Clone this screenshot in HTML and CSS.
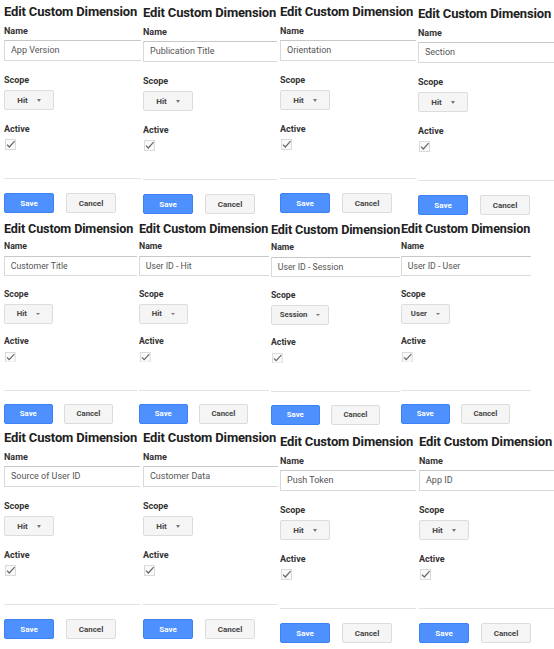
FILE: index.html
```html
<!DOCTYPE html>
<html lang="en">
<head>
    <meta charset="UTF-8">
    <meta name="viewport" content="width=device-width, initial-scale=1.0">
    <title>Edit Custom Dimension</title>
    <link rel="stylesheet" href="styles.css">
</head>
<body>
    <div class="collage">
        <!-- first row of screenshots -->
        <div class="row row-top">
            <section class="tile tile-1">
                <div class="panel">
                    <h2 class="title">Edit Custom Dimension</h2>
                    <div class="label">Name</div>
                    <div class="field">App Version</div>
                    <div class="label spaced">Scope</div>
                    <div class="scope">Hit <span class="caret"></span></div>
                    <div class="label spaced">Active</div>
                    <svg class="check" viewBox="0 0 11 11"><rect x="0.5" y="0.5" width="10" height="10"/><path d="M2 5.6 L4.3 8 L9.6 2.2"/></svg>
                    <hr class="divider">
                    <div class="actions"><span class="btn save">Save</span><span class="btn cancel">Cancel</span></div>
                </div>
            </section>
            <section class="tile tile-2">
                <div class="panel">
                    <h2 class="title">Edit Custom Dimension</h2>
                    <div class="label">Name</div>
                    <div class="field">Publication Title</div>
                    <div class="label spaced">Scope</div>
                    <div class="scope">Hit <span class="caret"></span></div>
                    <div class="label spaced">Active</div>
                    <svg class="check" viewBox="0 0 11 11"><rect x="0.5" y="0.5" width="10" height="10"/><path d="M2 5.6 L4.3 8 L9.6 2.2"/></svg>
                    <hr class="divider">
                    <div class="actions"><span class="btn save">Save</span><span class="btn cancel">Cancel</span></div>
                </div>
            </section>
            <section class="tile tile-3">
                <div class="panel">
                    <h2 class="title">Edit Custom Dimension</h2>
                    <div class="label">Name</div>
                    <div class="field">Orientation</div>
                    <div class="label spaced">Scope</div>
                    <div class="scope">Hit <span class="caret"></span></div>
                    <div class="label spaced">Active</div>
                    <svg class="check" viewBox="0 0 11 11"><rect x="0.5" y="0.5" width="10" height="10"/><path d="M2 5.6 L4.3 8 L9.6 2.2"/></svg>
                    <hr class="divider">
                    <div class="actions"><span class="btn save">Save</span><span class="btn cancel">Cancel</span></div>
                </div>
            </section>
            <section class="tile tile-4">
                <div class="panel">
                    <h2 class="title">Edit Custom Dimension</h2>
                    <div class="label">Name</div>
                    <div class="field">Section</div>
                    <div class="label spaced">Scope</div>
                    <div class="scope">Hit <span class="caret"></span></div>
                    <div class="label spaced">Active</div>
                    <svg class="check" viewBox="0 0 11 11"><rect x="0.5" y="0.5" width="10" height="10"/><path d="M2 5.6 L4.3 8 L9.6 2.2"/></svg>
                    <hr class="divider">
                    <div class="actions"><span class="btn save">Save</span><span class="btn cancel">Cancel</span></div>
                </div>
            </section>
        </div>

        <!-- second row, captured slightly smaller -->
        <div class="row row-mid">
            <section class="tile tile-5">
                <div class="panel">
                    <h2 class="title">Edit Custom Dimension</h2>
                    <div class="label">Name</div>
                    <div class="field">Customer Title</div>
                    <div class="label spaced">Scope</div>
                    <div class="scope">Hit <span class="caret"></span></div>
                    <div class="label spaced">Active</div>
                    <svg class="check" viewBox="0 0 11 11"><rect x="0.5" y="0.5" width="10" height="10"/><path d="M2 5.6 L4.3 8 L9.6 2.2"/></svg>
                    <hr class="divider">
                    <div class="actions"><span class="btn save">Save</span><span class="btn cancel">Cancel</span></div>
                </div>
            </section>
            <section class="tile tile-6">
                <div class="panel">
                    <h2 class="title">Edit Custom Dimension</h2>
                    <div class="label">Name</div>
                    <div class="field">User ID - Hit</div>
                    <div class="label spaced">Scope</div>
                    <div class="scope">Hit <span class="caret"></span></div>
                    <div class="label spaced">Active</div>
                    <svg class="check" viewBox="0 0 11 11"><rect x="0.5" y="0.5" width="10" height="10"/><path d="M2 5.6 L4.3 8 L9.6 2.2"/></svg>
                    <hr class="divider">
                    <div class="actions"><span class="btn save">Save</span><span class="btn cancel">Cancel</span></div>
                </div>
            </section>
            <section class="tile tile-7">
                <div class="panel">
                    <h2 class="title">Edit Custom Dimension</h2>
                    <div class="label">Name</div>
                    <div class="field">User ID - Session</div>
                    <div class="label spaced">Scope</div>
                    <div class="scope">Session <span class="caret"></span></div>
                    <div class="label spaced">Active</div>
                    <svg class="check" viewBox="0 0 11 11"><rect x="0.5" y="0.5" width="10" height="10"/><path d="M2 5.6 L4.3 8 L9.6 2.2"/></svg>
                    <hr class="divider">
                    <div class="actions"><span class="btn save">Save</span><span class="btn cancel">Cancel</span></div>
                </div>
            </section>
            <section class="tile tile-8">
                <div class="panel">
                    <h2 class="title">Edit Custom Dimension</h2>
                    <div class="label">Name</div>
                    <div class="field">User ID - User</div>
                    <div class="label spaced">Scope</div>
                    <div class="scope">User <span class="caret"></span></div>
                    <div class="label spaced">Active</div>
                    <svg class="check" viewBox="0 0 11 11"><rect x="0.5" y="0.5" width="10" height="10"/><path d="M2 5.6 L4.3 8 L9.6 2.2"/></svg>
                    <hr class="divider">
                    <div class="actions"><span class="btn save">Save</span><span class="btn cancel">Cancel</span></div>
                </div>
            </section>
        </div>

        <!-- third row -->
        <div class="row row-bottom">
            <section class="tile tile-9">
                <div class="panel">
                    <h2 class="title">Edit Custom Dimension</h2>
                    <div class="label">Name</div>
                    <div class="field">Source of User ID</div>
                    <div class="label spaced">Scope</div>
                    <div class="scope">Hit <span class="caret"></span></div>
                    <div class="label spaced">Active</div>
                    <svg class="check" viewBox="0 0 11 11"><rect x="0.5" y="0.5" width="10" height="10"/><path d="M2 5.6 L4.3 8 L9.6 2.2"/></svg>
                    <hr class="divider">
                    <div class="actions"><span class="btn save">Save</span><span class="btn cancel">Cancel</span></div>
                </div>
            </section>
            <section class="tile tile-10">
                <div class="panel">
                    <h2 class="title">Edit Custom Dimension</h2>
                    <div class="label">Name</div>
                    <div class="field">Customer Data</div>
                    <div class="label spaced">Scope</div>
                    <div class="scope">Hit <span class="caret"></span></div>
                    <div class="label spaced">Active</div>
                    <svg class="check" viewBox="0 0 11 11"><rect x="0.5" y="0.5" width="10" height="10"/><path d="M2 5.6 L4.3 8 L9.6 2.2"/></svg>
                    <hr class="divider">
                    <div class="actions"><span class="btn save">Save</span><span class="btn cancel">Cancel</span></div>
                </div>
            </section>
            <section class="tile tile-11">
                <div class="panel">
                    <h2 class="title">Edit Custom Dimension</h2>
                    <div class="label">Name</div>
                    <div class="field">Push Token</div>
                    <div class="label spaced">Scope</div>
                    <div class="scope">Hit <span class="caret"></span></div>
                    <div class="label spaced">Active</div>
                    <svg class="check" viewBox="0 0 11 11"><rect x="0.5" y="0.5" width="10" height="10"/><path d="M2 5.6 L4.3 8 L9.6 2.2"/></svg>
                    <hr class="divider">
                    <div class="actions"><span class="btn save">Save</span><span class="btn cancel">Cancel</span></div>
                </div>
            </section>
            <section class="tile tile-12">
                <div class="panel">
                    <h2 class="title">Edit Custom Dimension</h2>
                    <div class="label">Name</div>
                    <div class="field">App ID</div>
                    <div class="label spaced">Scope</div>
                    <div class="scope">Hit <span class="caret"></span></div>
                    <div class="label spaced">Active</div>
                    <svg class="check" viewBox="0 0 11 11"><rect x="0.5" y="0.5" width="10" height="10"/><path d="M2 5.6 L4.3 8 L9.6 2.2"/></svg>
                    <hr class="divider">
                    <div class="actions"><span class="btn save">Save</span><span class="btn cancel">Cancel</span></div>
                </div>
            </section>
        </div>
    </div>
</body>
</html>
```

FILE: styles.css
```css
/* base */
body {
    margin: 0;
    background-color: #fff;
    font-family: Roboto, "Liberation Sans", Arial, sans-serif;
    color: #222;
}
.collage {
    width: 554px;
    height: 649px;
    overflow: hidden;
}
.row {
    display: flex;
    overflow: hidden;
}
.row-top {
    height: 217px;
}
.row-mid {
    height: 209px;
}
.row-bottom {
    height: 223px;
}

/* each tile is one cropped screenshot */
.tile {
    flex: none;
    box-sizing: border-box;
    overflow: hidden;
}
.tile-1 { width: 141px; padding-left: 4px; }
.tile-2 { width: 136px; padding-left: 2px; padding-top: 1px; }
.tile-3 { width: 139px; padding-left: 3px; }
.tile-4 { width: 138px; padding-left: 2px; padding-top: 2px; }
.tile-5 { width: 137px; padding-left: 4px; }
.tile-6 { width: 132px; padding-left: 2px; }
.tile-7 { width: 131px; padding-left: 2px; padding-top: 1px; }
.tile-8 { width: 131px; padding-left: 1px; }
.tile-9 { width: 140px; padding-left: 4px; }
.tile-10 { width: 138px; padding-left: 3px; }
.tile-11 { width: 138px; padding-left: 2px; padding-top: 4px; }
.tile-12 { width: 138px; padding-left: 3px; padding-top: 4px; }

.panel {
    margin-right: -20px;
    padding-top: 4px;
}
.row-mid .panel {
    zoom: 0.97;
}

/* form */
.title {
    margin: 0;
    font-size: 13px;
    line-height: 16px;
    font-weight: 700;
    letter-spacing: -0.15px;
    white-space: nowrap;
    color: #212121;
}
.label {
    margin-top: 5px;
    font-size: 9px;
    line-height: 12px;
    font-weight: 700;
    color: #333;
}
.label.spaced {
    margin-top: 13px;
}
.field {
    margin-top: 3px;
    height: 21px;
    box-sizing: border-box;
    padding-left: 6px;
    border: 1px solid #d9d9d9;
    border-top-color: #c8c8c8;
    font-size: 9px;
    line-height: 19px;
    color: #555;
    white-space: nowrap;
}
.scope {
    margin-top: 4px;
    display: flex;
    align-items: center;
    justify-content: center;
    gap: 9px;
    width: fit-content;
    min-width: 50px;
    height: 20px;
    box-sizing: border-box;
    padding: 0 8px;
    background-color: #f5f5f5;
    border: 1px solid #dcdcdc;
    border-radius: 2px;
    font-size: 8px;
    font-weight: 700;
    color: #444;
}
.caret {
    width: 0;
    height: 0;
    border-left: 2.5px solid transparent;
    border-right: 2.5px solid transparent;
    border-top: 3px solid #777;
}
.check {
    display: block;
    margin-top: 4px;
    margin-left: 1px;
    width: 11px;
    height: 11px;
}
.check rect {
    fill: #fafafa;
    stroke: #dadada;
}
.check path {
    fill: none;
    stroke: #666;
    stroke-width: 1.2;
}
.divider {
    margin: 28px 0 0;
    height: 0;
    border: 0;
    border-top: 1px solid #e3e3e3;
}

/* buttons */
.actions {
    display: flex;
    gap: 12px;
    margin-top: 14px;
}
.btn {
    display: flex;
    align-items: center;
    justify-content: center;
    width: 50px;
    height: 20px;
    box-sizing: border-box;
    border-radius: 2px;
    font-size: 8px;
    font-weight: 700;
}
.save {
    background-color: #4d90fe;
    border: 1px solid #3d82f5;
    color: #fff;
}
.cancel {
    background-color: #f5f5f5;
    border: 1px solid #dcdcdc;
    color: #444;
}
```
